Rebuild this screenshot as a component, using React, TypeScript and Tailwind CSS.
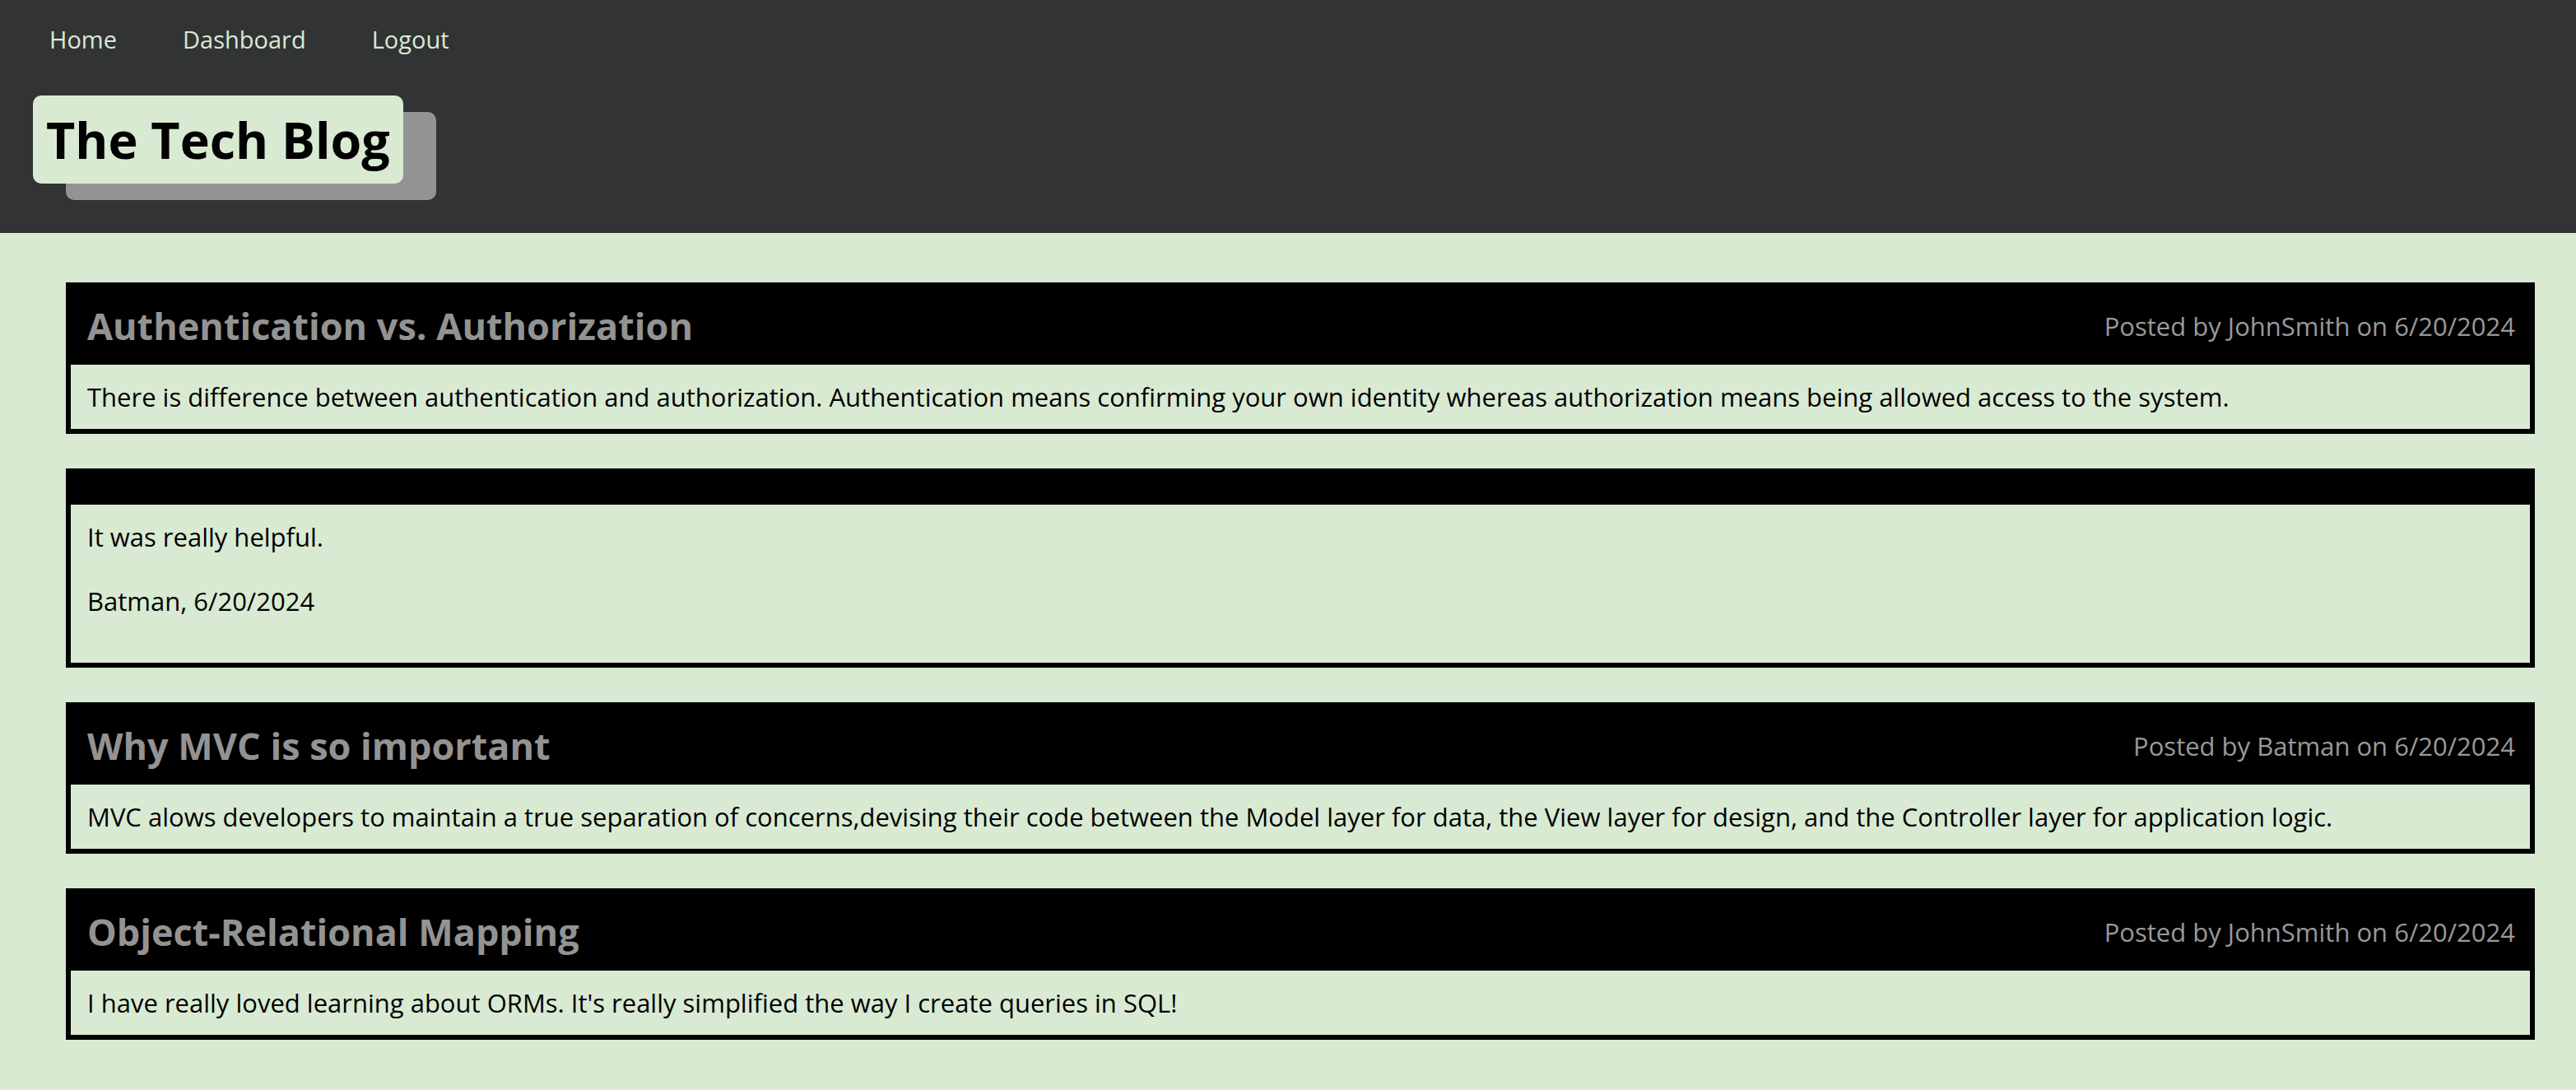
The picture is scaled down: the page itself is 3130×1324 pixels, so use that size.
const posts = [
  {
    title: "Authentication vs. Authorization",
    author: "JohnSmith",
    date: "6/20/2024",
    body: "There is difference between authentication and authorization. Authentication means confirming your own identity whereas authorization means being allowed access to the system.",
  },
  {
    title: "Why MVC is so important",
    author: "Batman",
    date: "6/20/2024",
    body: "MVC alows developers to maintain a true separation of concerns,devising their code between the Model layer for data, the View layer for design, and the Controller layer for application logic.",
  },
  {
    title: "Object-Relational Mapping",
    author: "JohnSmith",
    date: "6/20/2024",
    body: "I have really loved learning about ORMs. It's really simplified the way I create queries in SQL!",
  },
];

function PostCard({ post }: { post: (typeof posts)[number] }) {
  return (
    <article className="border-[6px] border-black">
      <div className="flex h-[94px] items-center justify-between bg-black pl-[20px] pr-[18px]">
        <h2 className="text-[45px] font-bold text-[#939393]">{post.title}</h2>
        <p className="text-[31px] text-[#999999]">
          Posted by {post.author} on {post.date}
        </p>
      </div>
      <div className="flex h-[78px] items-center px-[20px]">
        <p className="text-[31px] text-black">{post.body}</p>
      </div>
    </article>
  );
}

export default function App() {
  return (
    <div className="min-h-screen bg-[#d9ead3] font-['Open_Sans',sans-serif]">
      {/* Header */}
      <header className="h-[283px] bg-[#323335]">
        <nav className="flex pl-[20px] pt-[24px]">
          <a className="px-[40px] text-[29px] leading-[48px] text-[#d9ead3]">Home</a>
          <a className="px-[40px] text-[29px] leading-[48px] text-[#d9ead3]">Dashboard</a>
          <a className="px-[40px] text-[29px] leading-[48px] text-[#d9ead3]">Logout</a>
        </nav>
        <div className="mt-[44px] pl-[40px]">
          <h1 className="inline-block rounded-[10px] bg-[#d9ead3] px-[16px] text-[61px] font-bold leading-[107px] text-black shadow-[40px_20px_0_#939393]">
            The Tech Blog
          </h1>
        </div>
      </header>

      {/* Posts */}
      <main className="ml-[80px] mr-[50px] flex flex-col gap-[42px] pb-[60px] pt-[60px]">
        <PostCard post={posts[0]} />

        {/* Comment */}
        <article className="border-[6px] border-black">
          <div className="h-[38px] bg-black" />
          <div className="px-[20px] pb-[56px] pt-[20px] text-[31px] text-black">
            <p className="leading-[38px]">It was really helpful.</p>
            <p className="mt-[40px] leading-[38px]">Batman, 6/20/2024</p>
          </div>
        </article>

        <PostCard post={posts[1]} />
        <PostCard post={posts[2]} />
      </main>
    </div>
  );
}
